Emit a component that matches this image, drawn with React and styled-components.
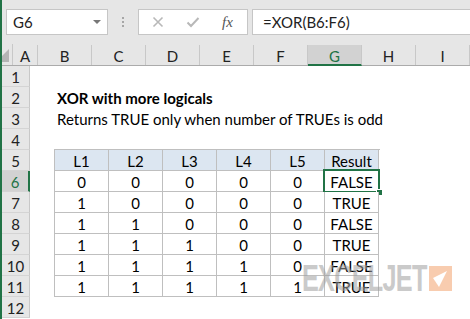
import React from 'react';
import styled, { createGlobalStyle } from 'styled-components';

const GlobalStyle = createGlobalStyle`
  html, body { margin: 0; padding: 0; background: #fff; }
`;

const GREEN = '#217346';
const COLUMNS = ['A', 'B', 'C', 'D', 'E', 'F', 'G', 'H', 'I'];
const HEADERS = ['L1', 'L2', 'L3', 'L4', 'L5', 'Result'];
const ROWS = [
    [0, 0, 0, 0, 0, 'FALSE'],
    [1, 0, 0, 0, 0, 'TRUE'],
    [1, 1, 0, 0, 0, 'FALSE'],
    [1, 1, 1, 0, 0, 'TRUE'],
    [1, 1, 1, 1, 0, 'FALSE'],
    [1, 1, 1, 1, 1, 'TRUE'],
];

const Page = styled.div`
    position: relative;
    width: 470px;
    height: 319px;
    overflow: hidden;
    box-sizing: border-box;
    border-left: 2px solid ${GREEN};
    background: #fff;
    font-family: Lato, "Liberation Sans", sans-serif;
    font-size: 15px;
    color: #000;
`;

const FormulaBar = styled.div`
    display: flex;
    align-items: flex-start;
    height: 44px;
    padding: 9px 0 0 4px;
    box-sizing: border-box;
    background: #e6e6e6;
`;

const NameBox = styled.div`
    display: flex;
    align-items: center;
    justify-content: space-between;
    width: 102px;
    height: 26px;
    box-sizing: border-box;
    border: 1px solid #c6c6c6;
    background: #fff;
    padding: 0 6px 0 6px;
    color: #222;
`;

const DropArrow = styled.span`
    width: 0;
    height: 0;
    border-left: 4px solid transparent;
    border-right: 4px solid transparent;
    border-top: 4px solid #777;
`;

const Grip = styled.div`
    display: flex;
    flex-direction: column;
    align-items: center;
    justify-content: center;
    gap: 2px;
    width: 30px;
    height: 26px;
    span {
        width: 2px;
        height: 2px;
        background: #a6a6a6;
    }
`;

const ButtonBox = styled.div`
    display: flex;
    align-items: center;
    width: 110px;
    height: 26px;
    box-sizing: border-box;
    border: 1px solid #c6c6c6;
    background: #fff;
    padding-left: 13px;
    gap: 22px;
`;

const Fx = styled.span`
    font-family: "Liberation Serif", serif;
    font-style: italic;
    font-size: 15px;
    color: #555;
`;

const FormulaInput = styled.div`
    flex: 1;
    height: 26px;
    margin-left: 4px;
    box-sizing: border-box;
    border: 1px solid #c6c6c6;
    border-right: none;
    background: #fff;
    padding-left: 10px;
    line-height: 24px;
    color: #222;
`;

const HeaderRow = styled.div`
    display: flex;
    height: 22px;
    box-sizing: border-box;
    background: #e6e6e6;
    border-bottom: 1px solid #ababab;
`;

const Corner = styled.div`
    position: relative;
    width: 28px;
    box-sizing: border-box;
    border-right: 1px solid #c8c8c8;
    &::after {
        content: '';
        position: absolute;
        right: 3px;
        bottom: 3px;
        width: 0;
        height: 0;
        border-left: 13px solid transparent;
        border-bottom: 13px solid #b4b4b4;
    }
`;

const ColHead = styled.div`
    width: ${p => p.$width}px;
    flex: none;
    box-sizing: border-box;
    display: flex;
    align-items: center;
    justify-content: center;
    padding-top: ${p => (p.$active ? 2 : 1)}px;
    margin-top: 1px;
    border-right: 1px solid #c8c8c8;
    border-bottom: ${p => (p.$active ? `2px solid ${GREEN}` : 'none')};
    margin-bottom: ${p => (p.$active ? -1 : 0)}px;
    background: ${p => (p.$active ? '#d2d2d2' : 'transparent')};
    color: ${p => (p.$active ? GREEN : '#222')};
`;

const Body = styled.div`
    display: flex;
`;

const RowHeads = styled.div`
    display: flex;
    flex-direction: column;
    width: 28px;
    flex: none;
`;

const RowHead = styled.div`
    height: 21px;
    box-sizing: border-box;
    display: flex;
    align-items: center;
    justify-content: center;
    padding-top: 1px;
    border-bottom: 1px solid #d4d4d4;
    border-right: ${p => (p.$active ? `2px solid ${GREEN}` : '1px solid #c8c8c8')};
    background: ${p => (p.$active ? '#d2d2d2' : '#e6e6e6')};
    color: ${p => (p.$active ? GREEN : '#222')};
`;

const Sheet = styled.div`
    flex: 1;
    padding-left: 24px;
`;

const TextRow = styled.div`
    height: 21px;
    padding: 1px 0 0 3px;
    box-sizing: border-box;
    line-height: 20px;
    white-space: nowrap;
    font-weight: ${p => (p.$bold ? 700 : 400)};
`;

const Table = styled.div`
    display: grid;
    grid-template-columns: repeat(6, 54px);
    width: 325px;
    margin-top: -1px;
    border-top: 1px solid #bfbfbf;
    border-left: 1px solid #bfbfbf;
`;

const Cell = styled.div`
    position: relative;
    height: 21px;
    box-sizing: border-box;
    padding-top: 1px;
    line-height: 20px;
    text-align: center;
    border-right: 1px solid #bfbfbf;
    border-bottom: 1px solid #bfbfbf;
    background: ${p => (p.$head ? '#dce6f1' : '#fff')};
`;

const Selection = styled.div`
    position: absolute;
    left: -2px;
    top: -2px;
    right: -2px;
    bottom: -2px;
    border: 2px solid ${GREEN};
    pointer-events: none;
    &::after {
        content: '';
        position: absolute;
        right: -4px;
        bottom: -4px;
        width: 5px;
        height: 5px;
        background: ${GREEN};
        border-left: 1px solid #fff;
        border-top: 1px solid #fff;
    }
`;

const Watermark = styled.div`
    position: absolute;
    left: 300px;
    top: 259px;
    display: flex;
    align-items: flex-start;
    gap: 4px;
    opacity: 0.55;
    pointer-events: none;
`;

const WatermarkText = styled.div`
    width: 123px;
    font-family: "Liberation Sans", sans-serif;
    font-weight: 700;
    font-size: 36px;
    line-height: 40px;
    color: #a0a0a0;
    letter-spacing: -1px;
    transform: scaleX(0.7);
    transform-origin: left top;
    white-space: nowrap;
`;

const Logo = styled.svg`
    margin-top: 7px;
`;

function Cross() {
    return (
        <svg width="12" height="12" viewBox="0 0 12 12">
            <path d="M1.5 1.5 L10.5 10.5 M10.5 1.5 L1.5 10.5" stroke="#b8b8b8" strokeWidth="1.6" fill="none" />
        </svg>
    );
}

function Check() {
    return (
        <svg width="14" height="12" viewBox="0 0 14 12">
            <path d="M1.5 6.5 L5 10 L12.5 2" stroke="#b8b8b8" strokeWidth="2" fill="none" />
        </svg>
    );
}

export default function App() {
    return (
        <Page>
            <GlobalStyle />
            <FormulaBar>
                <NameBox>
                    G6
                    <DropArrow />
                </NameBox>
                <Grip><span /><span /><span /></Grip>
                <ButtonBox>
                    <Cross />
                    <Check />
                    <Fx>fx</Fx>
                </ButtonBox>
                <FormulaInput>=XOR(B6:F6)</FormulaInput>
            </FormulaBar>

            <HeaderRow>
                <Corner />
                {COLUMNS.map((c, i) => (
                    <ColHead key={c} $width={i === 0 ? 25 : 54} $active={c === 'G'}>
                        {c}
                    </ColHead>
                ))}
            </HeaderRow>

            <Body>
                <RowHeads>
                    {Array.from({ length: 12 }, (_, i) => (
                        <RowHead key={i} $active={i + 1 === 6}>{i + 1}</RowHead>
                    ))}
                </RowHeads>
                <Sheet>
                    <TextRow />
                    <TextRow $bold>XOR with more logicals</TextRow>
                    <TextRow>Returns TRUE only when number of TRUEs is odd</TextRow>
                    <TextRow />
                    <Table>
                        {HEADERS.map(h => (
                            <Cell key={h} $head>{h}</Cell>
                        ))}
                        {ROWS.map((row, r) =>
                            row.map((v, c) => (
                                <Cell key={`${r}-${c}`}>
                                    {v}
                                    {r === 0 && c === 5 && <Selection />}
                                </Cell>
                            ))
                        )}
                    </Table>
                </Sheet>
            </Body>

            <Watermark>
                <WatermarkText>EXCELJET</WatermarkText>
                <Logo width="23" height="25" viewBox="0 0 23 25">
                    <rect width="23" height="25" fill="#f4a46e" />
                    <polygon points="4,12 18,5 10,21" fill="#fff" />
                </Logo>
            </Watermark>
        </Page>
    );
}
